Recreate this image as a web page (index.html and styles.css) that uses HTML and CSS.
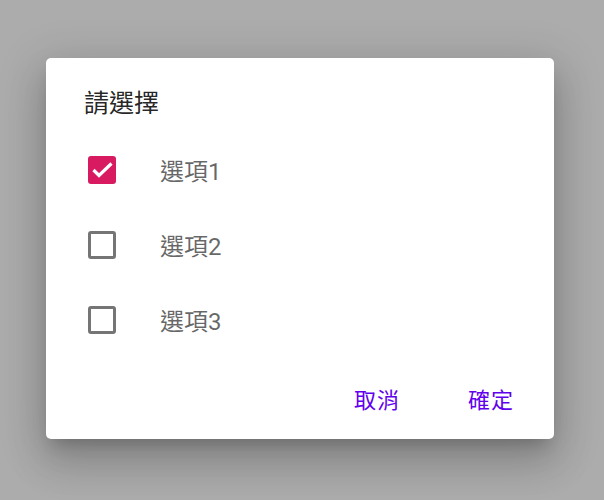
FILE: index.html
```html
<!DOCTYPE html>
<html lang="zh-Hant">
<head>
<meta charset="utf-8">
<link rel="stylesheet" href="styles.css">
</head>
<body>
<div class="dialog">
  <div class="title">請選擇</div>
  <div class="list">
    <div class="item">
      <span class="box checked">
        <svg viewBox="0 0 28 28" width="28" height="28"><path d="M5.5 14 L11 19.5 L23.5 7.5" fill="none" stroke="#fff" stroke-width="3.2"/></svg>
      </span>
      <span class="label">選項1</span>
    </div>
    <div class="item">
      <span class="box"></span>
      <span class="label">選項2</span>
    </div>
    <div class="item">
      <span class="box"></span>
      <span class="label">選項3</span>
    </div>
  </div>
  <div class="actions">
    <span class="btn">取消</span>
    <span class="btn">確定</span>
  </div>
</div>
</body>
</html>
```
FILE: styles.css
```css
html, body {
  margin: 0;
  padding: 0;
}
body {
  background: #acacac;
  width: 604px;
  height: 500px;
  font-family: "Roboto", "Noto Sans CJK TC", sans-serif;
  padding-top: 58px;
  box-sizing: border-box;
}
.dialog {
  margin-left: 46px;
  width: 508px;
  height: 381px;
  background: #fff;
  border-radius: 5px;
  box-shadow: 0 11px 15px -7px rgba(0,0,0,0.2), 0 24px 38px 3px rgba(0,0,0,0.14), 0 9px 46px 8px rgba(0,0,0,0.12);
  box-sizing: border-box;
  padding: 28px 0 0 0;
  display: flex;
  flex-direction: column;
}
.title {
  padding-left: 38px;
  font-size: 25px;
  line-height: 36px;
  color: rgba(0,0,0,0.87);
}
.list {
  margin-top: 10px;
  display: flex;
  flex-direction: column;
}
.item {
  height: 75px;
  display: flex;
  align-items: center;
  padding-left: 42px;
}
.box {
  width: 28px;
  height: 28px;
  box-sizing: border-box;
  border: 3px solid #757575;
  border-radius: 3px;
  display: flex;
  align-items: center;
  justify-content: center;
}
.box.checked {
  background: #d81b60;
  border: none;
}
.label {
  margin-left: 44px;
  font-size: 24px;
  color: rgba(0,0,0,0.6);
}
.actions {
  display: flex;
  justify-content: flex-end;
  gap: 68px;
  padding-right: 40px;
  margin-top: 26px;
}
.btn {
  font-size: 22px;
  line-height: 36px;
  color: #6200ee;
  letter-spacing: 1px;
}
```
